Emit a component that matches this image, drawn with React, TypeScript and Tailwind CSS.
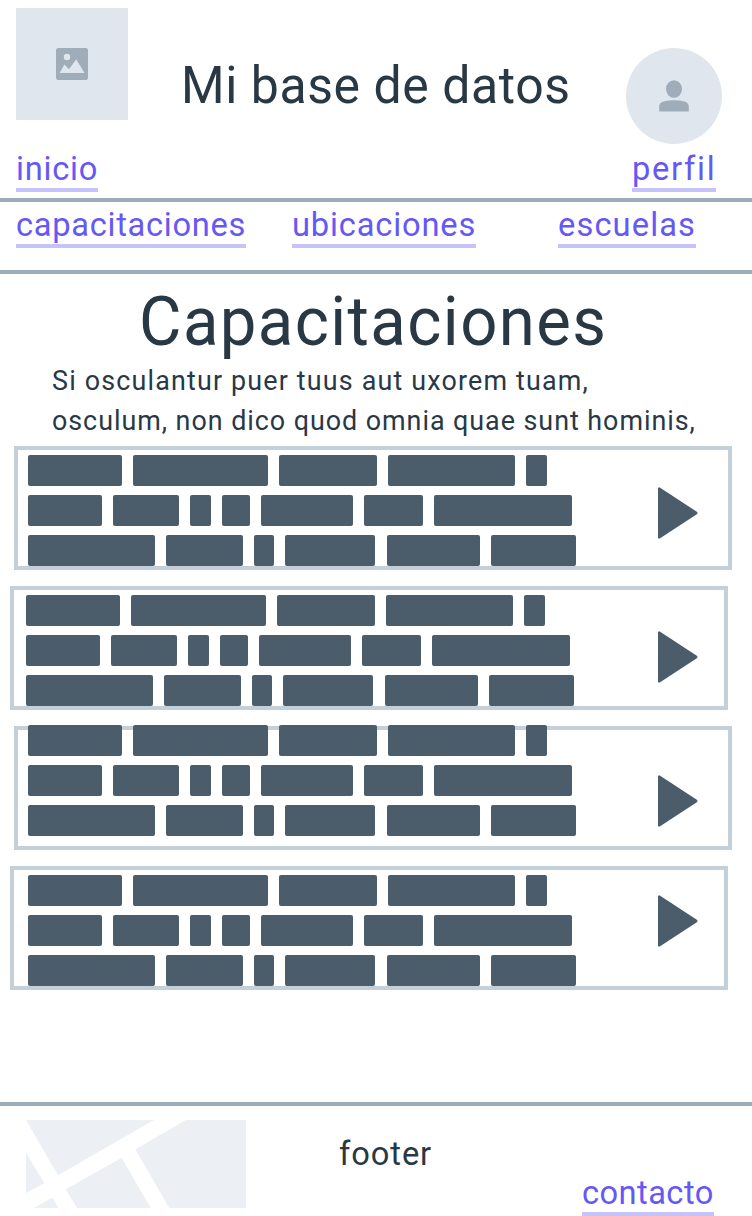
import type { ReactNode } from "react";

function Label({ className, children }: { className: string; children: ReactNode }) {
  return (
    <span className={`block origin-left scale-x-[0.96] whitespace-nowrap ${className}`}>{children}</span>
  );
}

function NavLink({ width, tracking, children }: { width: string; tracking: string; children: string }) {
  return (
    <a href="#" className={`block h-11 border-b-4 border-[#c6c3fb] text-[34px] leading-10 text-[#6558f5] ${width}`}>
      <Label className={tracking}>{children}</Label>
    </a>
  );
}

const blockRows = [
  [94.3, 134.5, 97.6, 127.4, 21.2],
  [74.4, 65.4, 21.1, 27.8, 91.8, 59.1, 137.6],
  [126.9, 76.9, 19.8, 90.6, 93, 85.1],
];

const cards = [
  { card: "ml-[14px]", text: "ml-[10px] mt-[5px]", play: "ml-[640px] mt-[37px]" },
  { card: "ml-[10px]", text: "ml-[12px] mt-[5px]", play: "ml-[644px] mt-[41px]" },
  { card: "ml-[14px]", text: "ml-[10px] -mt-[5px]", play: "ml-[640px] mt-[45px]" },
  { card: "ml-[10px]", text: "ml-[14px] mt-[5px]", play: "ml-[644px] mt-[25px]" },
];

function Card({ card, text, play }: { card: string; text: string; play: string }) {
  return (
    <article className={`grid h-[124px] w-[718px] items-start border-4 border-[#c3d0da] ${card}`}>
      <div className={`col-start-1 row-start-1 flex flex-col gap-[9px] ${text}`}>
        {blockRows.map((row, i) => (
          <div key={i} className="flex gap-[11.1px]">
            {row.map((w, j) => (
              <span key={j} className="h-[31px] shrink-0 rounded-[2px] bg-[#4b5c6a]" style={{ width: w }} />
            ))}
          </div>
        ))}
      </div>
      <svg className={`col-start-1 row-start-1 h-[52px] w-10 ${play}`} viewBox="0 0 40 52">
        <path d="M1.3 1.9V50.1L38 26Z" fill="#4b5c6a" stroke="#4b5c6a" strokeWidth="3" strokeLinejoin="round" />
      </svg>
    </article>
  );
}

export default function App() {
  return (
    <div className="flex h-[1216px] w-[752px] flex-col overflow-hidden bg-white font-['Roboto',sans-serif] text-[#283845]">
      <header className="flex h-[202px] shrink-0 border-b-4 border-[#9dacb9]">
        <div className="ml-4 mt-2 flex w-28 flex-col gap-7">
          <div className="flex size-28 items-center justify-center bg-[#dfe6ed]">
            <svg className="size-8" viewBox="0 0 32 32">
              <rect width="32" height="32" rx="2.5" fill="#9eadb9" />
              <circle cx="11" cy="9" r="3.2" fill="#dfe6ed" />
              <path d="M3.6 24.9L8.5 16.4L13 21.2L20.2 11.2L28.5 24.9Z" fill="#dfe6ed" />
            </svg>
          </div>
          <NavLink width="w-[82px]" tracking="tracking-[0.78px]">inicio</NavLink>
        </div>
        <h1 className="ml-[53px] mt-[56px] w-[429px] text-[52px] leading-[60px]">
          <Label className="tracking-[0.6px]">Mi base de datos</Label>
        </h1>
        <div className="ml-4 mt-12 flex w-24 flex-col items-center gap-1">
          <div className="flex size-24 items-center justify-center rounded-full bg-[#dfe6ed]">
            <svg className="h-8 w-[30px]" viewBox="0 0 30 32" fill="#9eadb9">
              <ellipse cx="15" cy="9" rx="8" ry="8.8" />
              <path d="M0.2 31.5V26.5Q0.2 22.8 4.5 21.5Q9 20.3 15 20.3T25.5 21.5Q29.8 22.8 29.8 26.5V31.5Z" />
            </svg>
          </div>
          <NavLink width="w-[84px]" tracking="tracking-[1.77px]">perfil</NavLink>
        </div>
      </header>

      <nav className="flex h-[72px] shrink-0 border-b-4 border-[#9dacb9] pl-4 pt-[2px]">
        <NavLink width="w-[230px]" tracking="tracking-[0.73px]">capacitaciones</NavLink>
        <div className="ml-[46px]">
          <NavLink width="w-[184px]" tracking="tracking-[0.87px]">ubicaciones</NavLink>
        </div>
        <div className="ml-[82px]">
          <NavLink width="w-[138px]" tracking="tracking-[1.17px]">escuelas</NavLink>
        </div>
      </nav>

      <main className="flex h-[828px] shrink-0 flex-col">
        <h2 className="ml-[139px] mt-2 h-20 text-[68px] leading-[80px]">
          <Label className="tracking-[1.46px]">Capacitaciones</Label>
        </h2>
        <div className="-mt-px ml-[51.5px] h-20 text-[28px] leading-10">
          <Label className="tracking-[1.22px]">Si osculantur puer tuus aut uxorem tuam,</Label>
          <Label className="tracking-[1px]">osculum, non dico quod omnia quae sunt hominis,</Label>
        </div>
        <section className="mt-[5px] flex flex-col gap-4">
          {cards.map((c, i) => (
            <Card key={i} {...c} />
          ))}
        </section>
      </main>

      <footer className="flex h-[114px] shrink-0 border-t-4 border-[#9dacb9]">
        <svg className="ml-[26px] mt-[14px] h-[88px] w-[220px]" viewBox="0 0 220 88" fill="#ecf0f4">
          <path d="M0 0H128L32 55.3Z" />
          <path d="M160 0H220V88H143.3L109.3 29.3Z" />
          <path d="M95.7 37.7L124.7 88H51L39.7 69.3Z" />
          <path d="M0 32.5L18.3 63.3L0 73.3Z" />
          <path d="M26.3 77.5L32.3 88H8Z" />
        </svg>
        <p className="ml-[93px] mt-[27px] w-[93px] text-[34px] leading-10">
          <Label className="tracking-[0.95px]">footer</Label>
        </p>
        <div className="ml-[150px] mt-[66px]">
          <NavLink width="w-[132px]" tracking="tracking-[0.46px]">contacto</NavLink>
        </div>
      </footer>
    </div>
  );
}
